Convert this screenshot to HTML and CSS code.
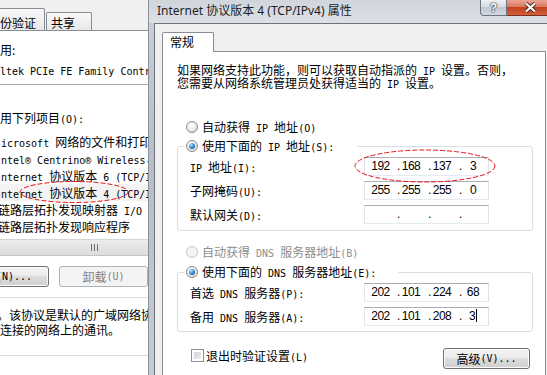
FILE: index.html
```html
<!DOCTYPE html>
<html lang="zh-CN">
<head>
    <meta charset="UTF-8">
    <title>Internet 协议版本 4 (TCP/IPv4) 属性</title>
    <link rel="stylesheet" href="styles.css">
</head>
<body>
<div class="desk">
    <!-- adapter properties window, mostly hidden behind the dialog -->
    <div class="back">
        <div class="back-tabs">
            <div class="btab btab-first">份验证</div>
            <div class="btab btab-second">共享</div>
        </div>
        <div class="back-page">
            <div class="connect-label">用:</div>
            <div class="adapter"><span class="m">ltek PCIe FE Family Controller</span></div>
            <div class="items-label">用下列项目<span class="m">(O):</span></div>
            <div class="items">
                <div class="item"><span class="m">icrosoft </span>网络的文件和打印机共享</div>
                <div class="item"><span class="m">ntel® Centrino® Wireless-N 1000</span></div>
                <div class="item"><span class="m">nternet </span>协议版本<span class="m"> 6 (TCP/IPv6)</span></div>
                <div class="item sel"><span class="m">nternet </span>协议版本<span class="m"> 4 (TCP/IPv4)</span></div>
                <div class="item cut">链路层拓扑发现映射器<span class="m"> I/O </span>驱动程序</div>
                <div class="item cut">链路层拓扑发现响应程序</div>
            </div>
            <div class="hscroll"><span class="grip"></span></div>
            <div class="back-btns">
                <div class="btn btn-install">安装<span class="m">(N)...</span></div>
                <div class="btn dis btn-remove">卸载<span class="m">(U)</span></div>
            </div>
            <div class="desc">
                <div class="desc-first">。该协议是默认的广域网络协议，它提供在不同的相互</div>
                <div>连接的网络上的通讯。</div>
            </div>
        </div>
    </div>

    <!-- TCP/IPv4 properties dialog -->
    <div class="dlg">
        <div class="titlebar">
            <span class="title">Internet 协议版本 4 (TCP/IPv4) 属性</span>
            <div class="caption-btns">
                <span class="cbtn help">?</span>
                <span class="cbtn close">
                    <svg width="13" height="11" viewBox="0 0 13 11">
                        <path d="M2 1.5 L11 9.5 M11 1.5 L2 9.5" stroke="#4a2a24" stroke-width="4.2" fill="none"/>
                        <path d="M2 1.5 L11 9.5 M11 1.5 L2 9.5" stroke="#fff" stroke-width="2.2" fill="none"/>
                    </svg>
                </span>
            </div>
        </div>
        <div class="dlg-body">
            <div class="edge"></div>
            <div class="client">
                <div class="tabs"><div class="tab">常规</div></div>
                <div class="page">
                    <p class="intro">如果网络支持此功能，则可以获取自动指派的<span class="m"> IP </span>设置。否则，<br>您需要从网络系统管理员处获得适当的<span class="m"> IP </span>设置。</p>

                    <div class="opt opt-first"><span class="radio"></span><span>自动获得<span class="m"> IP </span>地址<span class="m">(O)</span></span></div>
                    <fieldset class="grp">
                        <legend class="legend-ip"><span class="opt"><span class="radio on"></span><span>使用下面的<span class="m"> IP </span>地址<span class="m">(S):</span></span></span></legend>
                        <div class="rows">
                            <label><span class="m">IP </span>地址<span class="m">(I):</span></label>
                            <div class="ip"><span class="o">192</span><span class="d">.</span><span class="o">168</span><span class="d">.</span><span class="o">137</span><span class="d">.</span><span class="o">3</span></div>
                            <label>子网掩码<span class="m">(U):</span></label>
                            <div class="ip"><span class="o">255</span><span class="d">.</span><span class="o">255</span><span class="d">.</span><span class="o">255</span><span class="d">.</span><span class="o">0</span></div>
                            <label>默认网关<span class="m">(D):</span></label>
                            <div class="ip"><span class="o"></span><span class="d">.</span><span class="o"></span><span class="d">.</span><span class="o"></span><span class="d">.</span><span class="o"></span></div>
                        </div>
                    </fieldset>

                    <div class="opt opt-dns off"><span class="radio off"></span><span>自动获得<span class="m"> DNS </span>服务器地址<span class="m">(B)</span></span></div>
                    <fieldset class="grp grp-dns">
                        <legend class="legend-dns"><span class="opt"><span class="radio on"></span><span>使用下面的<span class="m"> DNS </span>服务器地址<span class="m">(E):</span></span></span></legend>
                        <div class="rows">
                            <label>首选<span class="m"> DNS </span>服务器<span class="m">(P):</span></label>
                            <div class="ip"><span class="o">202</span><span class="d">.</span><span class="o">101</span><span class="d">.</span><span class="o">224</span><span class="d">.</span><span class="o">68</span></div>
                            <label>备用<span class="m"> DNS </span>服务器<span class="m">(A):</span></label>
                            <div class="ip"><span class="o">202</span><span class="d">.</span><span class="o">101</span><span class="d">.</span><span class="o">208</span><span class="d">.</span><span class="o">3<i class="caret"></i></span></div>
                        </div>
                    </fieldset>

                    <div class="foot">
                        <div class="chk"><span class="check"></span><span>退出时验证设置<span class="m">(L)</span></span></div>
                        <div class="btn btn-adv">高级<span class="m">(V)...</span></div>
                    </div>
                </div>
            </div>
        </div>
    </div>

    <!-- red hand-drawn marks -->
    <svg class="marks" width="547" height="375" viewBox="0 0 547 375">
        <ellipse cx="74" cy="192" rx="54" ry="10.5" fill="none" stroke="#e8141b" stroke-width="1" stroke-dasharray="5 2"/>
        <ellipse cx="425" cy="166" rx="70" ry="16" fill="none" stroke="#e8141b" stroke-width="1" stroke-dasharray="5 2"/>
    </svg>
</div>
</body>
</html>
```

FILE: styles.css
```css
* {
    box-sizing: border-box;
}

body {
    margin: 0;
    width: 547px;
    height: 375px;
    overflow: hidden;
    font-family: "Noto Sans CJK SC", sans-serif;
    font-size: 12px;
    color: #000;
    background: #f0f0f0;
}

.desk {
    position: relative;
    display: flex;
    height: 375px;
}

/* half-width latin, like the bitmap system font */
.m {
    font-family: "DejaVu Sans Mono", monospace;
    font-size: 10px;
    line-height: 0;
}

/* ---------- window behind ---------- */

.back {
    width: 148px;
    flex: none;
    overflow: hidden;
    white-space: nowrap;
    display: flex;
    flex-direction: column;
}

.back-tabs {
    height: 31px;
    flex: none;
    display: flex;
    align-items: flex-end;
    background: #f0f0f0;
    border-bottom: 1px solid #898c95;
}

.btab {
    width: 46px;
    border: 1px solid #898c95;
    border-bottom: none;
    border-radius: 2px 2px 0 0;
    background: linear-gradient(#f8f8f8, #e8e8e8);
    line-height: 12px;
    overflow: hidden;
}

.btab-first {
    height: 22px;
    margin-left: -1px;
    padding-top: 8px;
}

.btab-second {
    height: 18px;
    margin-left: 1px;
    padding: 4px 0 0 4px;
}

.back-page {
    flex: 1;
    background: #fff;
}

.connect-label {
    margin-top: 13px;
    line-height: 12px;
}

.adapter {
    margin-top: 4px;
    padding: 4px 0 8px 0;
    line-height: 12px;
    border-bottom: 1px solid #a5acb5;
}

.items-label {
    margin-top: 27px;
    line-height: 12px;
}

.items {
    margin-top: 9px;
}

.item {
    height: 17px;
    line-height: 17px;
    padding-left: 1px;
}

.item.sel {
    background: #f3f3f3;
}

.item.cut {
    text-indent: -3px;
}

.hscroll {
    height: 17px;
    margin-top: 4px;
    display: flex;
    align-items: center;
    background: linear-gradient(#ececec, #dcdcdc);
    border-top: 1px solid #d4d4d4;
    border-bottom: 1px solid #c4c4c4;
}

.grip {
    margin-left: 91px;
    width: 7px;
    height: 7px;
    background: repeating-linear-gradient(to right, #6e6e6e 0 1px, transparent 1px 3px);
}

.back-btns {
    display: flex;
    margin-top: 10px;
}

.btn {
    height: 21px;
    display: flex;
    align-items: center;
    justify-content: center;
    line-height: 12px;
    border: 1px solid #707070;
    border-radius: 3px;
    background: linear-gradient(#f2f2f2 0, #ebebeb 50%, #dddddd 50%, #cfcfcf 100%);
    box-shadow: inset 0 0 0 1px #fcfcfc;
    white-space: nowrap;
    overflow: hidden;
}

.btn.dis {
    border-color: #adb2b5;
    background: #f4f4f4;
    box-shadow: none;
    color: #838383;
}

.btn-install {
    width: 53px;
    margin-left: -2px;
    justify-content: flex-end;
    padding-right: 16px;
}

.btn-remove {
    width: 94px;
    margin-left: 10px;
}

.desc {
    margin-top: 10px;
    padding: 9px 0 18px;
    line-height: 15px;
    border-top: 1px solid #d5dfe5;
    border-bottom: 1px solid #d5dfe5;
}

.desc-first {
    text-indent: -3px;
}

/* ---------- dialog ---------- */

.dlg {
    flex: 1;
    min-width: 0;
    display: flex;
    flex-direction: column;
}

.titlebar {
    height: 23px;
    flex: none;
    display: flex;
    align-items: flex-start;
    border-left: 1px solid #8a9098;
    background: linear-gradient(#d0d5db, #dde1e6);
}

.title {
    font-family: "Noto Sans", "Noto Sans CJK SC", sans-serif;
    font-size: 12px;
    line-height: 22px;
    padding-left: 8px;
    color: #1b1e24;
    white-space: nowrap;
}

.caption-btns {
    margin-left: auto;
    display: flex;
}

.cbtn {
    height: 16px;
    display: flex;
    align-items: center;
    justify-content: center;
    border: 1px solid #6b7480;
    border-top: none;
}

.help {
    width: 27px;
    border-radius: 0 0 0 4px;
    background: linear-gradient(#eef0f3, #d5d9df 50%, #c3c9d1 50%, #d3d8de);
    font-family: "Liberation Sans", sans-serif;
    font-weight: bold;
    font-size: 12px;
    color: #fff;
    text-shadow: 0 0 1px #2f3540, 0 0 1px #2f3540, 0 0 2px #2f3540;
}

.close {
    width: 40px;
    padding-left: 7px;
    border-left: none;
    border-right: none;
    border-color: #7d3020;
    background: linear-gradient(#e9a593, #d9765c 50%, #c2421f 50%, #d2603f);
}

.dlg-body {
    flex: 1;
    display: flex;
    min-height: 0;
}

.edge {
    width: 6px;
    flex: none;
    border-left: 1px solid #8a9098;
    background: linear-gradient(#c9ced5, #b7bec7 40%, #c6ccd3);
}

.client {
    flex: 1;
    min-width: 0;
    overflow: hidden;
    padding: 8px 0 0 7px;
    background: #f0f0f0;
    border-top: 1px solid #6d7279;
    border-left: 1px solid #6d7279;
}

.tabs {
    display: flex;
}

.tab {
    position: relative;
    z-index: 1;
    width: 52px;
    height: 20px;
    margin-bottom: -1px;
    padding: 3px 0 0 7px;
    line-height: 12px;
    background: #fff;
    border: 1px solid #898c95;
    border-bottom: none;
    border-radius: 2px 2px 0 0;
}

.page {
    width: 384px;
    height: 330px;
    padding: 11px 12px 0 14px;
    background: #fff;
    border: 1px solid #898c95;
    white-space: nowrap;
}

.intro {
    margin: 0;
    line-height: 13px;
}

.opt {
    display: flex;
    align-items: center;
    gap: 4px;
    height: 16px;
    line-height: 12px;
}

.opt-first {
    margin-top: 30px;
    padding-left: 9px;
}

.opt-dns {
    margin-top: 13px;
    padding-left: 9px;
}

.opt.off {
    color: #8d8d8d;
}

.radio {
    position: relative;
    flex: none;
    width: 12px;
    height: 12px;
    border-radius: 50%;
    border: 1px solid #8a8a8a;
    background: radial-gradient(circle at 40% 35%, #fff 0, #f1f1f1 40%, #cbcbcb 100%);
}

.radio.on::after {
    content: "";
    position: absolute;
    left: 2px;
    top: 2px;
    width: 6px;
    height: 6px;
    border-radius: 50%;
    background: radial-gradient(circle at 35% 30%, #b0e4ff, #2f82cb 55%, #0c3c76);
}

.radio.off {
    border-color: #c8c8c8;
    background: #f4f4f4;
}

.grp {
    margin: 3px 0 0;
    padding: 3px 0 6px 12px;
    min-width: 0;
    border: 1px solid #d5dfe5;
    border-radius: 3px;
}

.grp legend {
    margin-left: -6px;
    padding: 0 2px;
    height: 16px;
}

.legend-ip {
    width: 173px;
}

.legend-dns {
    width: 214px;
}

.grp-dns {
    margin-top: 4px;
    padding-bottom: 5px;
}

.rows {
    display: grid;
    grid-template-columns: 174px 125px;
    grid-auto-rows: 19px;
    row-gap: 5px;
    align-items: center;
}

.rows label {
    line-height: 12px;
}

.ip {
    height: 19px;
    display: flex;
    align-items: center;
    border: 1px solid #e2e3ea;
    border-top-color: #abadb3;
    border-bottom-color: #e3e9ef;
    font-family: "Liberation Sans", sans-serif;
    font-size: 12px;
    letter-spacing: -0.5px;
    line-height: 17px;
}

.ip .o {
    width: 20px;
    margin-right: 6px;
    text-align: center;
}

.ip .o:first-child {
    width: 31px;
    margin-right: 0;
}

.ip .o:last-child {
    margin-right: 0;
}

.ip .d {
    width: 5px;
    text-align: center;
}

.caret {
    display: inline-block;
    width: 1px;
    height: 13px;
    margin-left: 1px;
    vertical-align: -2px;
    background: #000;
}

.foot {
    display: flex;
    align-items: center;
    justify-content: space-between;
    margin-top: 16px;
    padding: 0 3px 0 14px;
}

.chk {
    display: flex;
    align-items: center;
    gap: 2px;
    margin-bottom: 6px;
    line-height: 12px;
}

.check {
    width: 13px;
    height: 13px;
    border: 1px solid #8f8f8f;
    background: linear-gradient(135deg, #c9cdd3, #f4f4f4);
    box-shadow: inset 0 0 0 2px #fff;
}

.btn-adv {
    width: 87px;
}

.marks {
    position: absolute;
    left: 0;
    top: 0;
    pointer-events: none;
}
```
